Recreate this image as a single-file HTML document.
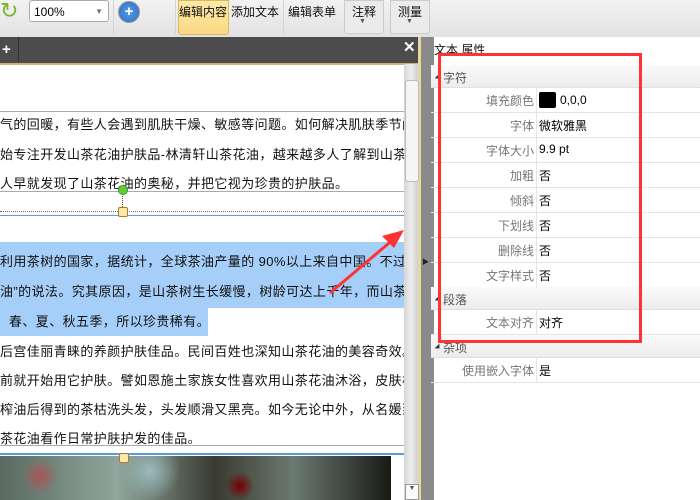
<html><head><style>
body{margin:0;width:700px;height:500px;overflow:hidden;position:relative;font-family:"Liberation Sans","Noto Sans CJK SC",sans-serif;background:#fff}
.a{position:absolute}
.t{position:absolute;font-size:13px;color:#111;white-space:nowrap}
.doc{position:absolute;left:0;top:64px;width:404px;height:436px;overflow:hidden}
.doc .t{letter-spacing:0.4px}
.row{position:absolute;left:431px;width:269px;height:25px;border-bottom:1px solid #e4e4e4;font-size:12px}
.row .l{position:absolute;right:166px;top:5px;color:#777}
.row .v{position:absolute;left:108px;top:5px;color:#000}
.row:before{content:"";position:absolute;left:105px;top:0;bottom:0;border-left:1px solid #e4e4e4}
.grp{position:absolute;left:431px;width:269px;height:22px;background:linear-gradient(#fafafa,#ececec);border-bottom:1px solid #e0e0e0;font-size:12px;color:#555}
.grp span{position:absolute;left:12px;top:4px}
.grp:before{content:"";position:absolute;left:3px;top:8px;border:3px solid transparent;border-right-color:#333;border-bottom-color:#333;transform:scale(.8)}
</style></head><body>
<div class="a" style="left:0;top:0;width:700px;height:37px;background:linear-gradient(#f2f2f2,#e2e2e2)"></div>
<div class="a" style="left:0;top:0;width:16px;height:24px;color:#7bb530;font-size:22px;line-height:22px">↻</div>
<div class="a" style="left:29px;top:0;width:80px;height:22px;background:#fff;border:1px solid #aaa;border-radius:3px;font-size:12px;line-height:22px;padding-left:4px;box-sizing:border-box">100%<span style="position:absolute;right:5px;top:0;color:#777;font-size:8px">▼</span></div>
<div class="a" style="left:118px;top:1px;width:20px;height:20px;border-radius:50%;background:radial-gradient(#5b9be0,#2a6fc5);border:1px solid #999;color:#fff;font-weight:bold;text-align:center;line-height:20px;font-size:15px">+</div>
<div class="a" style="left:113px;top:0;width:1px;height:34px;background:#d4d4d4"></div>
<div class="a" style="left:175px;top:0;width:1px;height:34px;background:#d4d4d4"></div>
<div class="a" style="left:178px;top:0;width:51px;height:35px;background:linear-gradient(#fdeaa8,#fad883);border:1px solid #d8b860;border-radius:0 0 3px 3px;box-sizing:border-box"></div>
<div class="t" style="left:179px;top:3px;font-size:12px">编辑内容</div>
<div class="t" style="left:231px;top:3px;font-size:12px">添加文本</div>
<div class="a" style="left:283px;top:0;width:1px;height:34px;background:#d4d4d4"></div>
<div class="t" style="left:288px;top:3px;font-size:12px">编辑表单</div>
<div class="a" style="left:344px;top:0;width:40px;height:34px;background:#ebebeb;border:1px solid #ccc;border-radius:0 0 3px 3px;box-sizing:border-box"></div>
<div class="t" style="left:352px;top:3px;font-size:12px">注释</div><div class="t" style="left:359px;top:18px;font-size:7px;color:#555">▼</div>
<div class="a" style="left:390px;top:0;width:40px;height:34px;background:#ebebeb;border:1px solid #ccc;border-radius:0 0 3px 3px;box-sizing:border-box"></div>
<div class="t" style="left:398px;top:3px;font-size:12px">测量</div><div class="t" style="left:406px;top:18px;font-size:7px;color:#555">▼</div>
<div class="a" style="left:0;top:37px;width:423px;height:26px;background:#4c4c4c;border-bottom:2px solid #c9b57a"></div>
<div class="a" style="left:0;top:37px;width:16px;height:25px;border-right:1px solid #333;color:#fff;font-weight:bold;font-size:15px;line-height:25px;padding-left:2px">+</div>
<div class="a" style="left:403px;top:38px;color:#fff;font-weight:bold;font-size:15px">✕</div>
<div class="a" style="left:418px;top:37px;width:13px;height:463px;background:#8a8a8a;border-left:3px solid #e8d8a0"></div>
<div class="t" style="left:422px;top:257px;font-size:7px;color:#222">▶</div>
<div class="a" style="left:404px;top:64px;width:14px;height:436px;background:linear-gradient(90deg,#d5d5d5,#eee,#d0d0d0)"></div>
<div class="a" style="left:405px;top:80px;width:12px;height:100px;background:#f5f5f5;border:1px solid #bbb;border-radius:3px"></div>
<div class="a" style="left:405px;top:484px;width:12px;height:14px;background:#fafafa;border:1px solid #999;font-size:7px;text-align:center;color:#555">▼</div>
<div class="doc">
<div class="a" style="left:0;top:47px;width:404px;height:1px;background:#aaa"></div>
<div class="t" style="left:0;top:50px">气的回暖，有些人会遇到肌肤干燥、敏感等问题。如何解决肌肤季节问</div>
<div class="t" style="left:0;top:80px">始专注开发山茶花油护肤品-林清轩山茶花油，越来越多人了解到山茶</div>
<div class="t" style="left:0;top:109px">人早就发现了山茶花油的奥秘，并把它视为珍贵的护肤品。</div>
<div class="a" style="left:0;top:127px;width:404px;height:1px;background:#aaa"></div>
<div class="a" style="left:122px;top:125px;border-left:1px dotted #444;height:22px"></div>
<div class="a" style="left:0;top:147px;width:404px;border-top:1px dotted #666"></div>
<div class="a" style="left:0;top:151px;width:404px;height:1px;background:#5b9be0"></div>
<div class="a" style="left:0;top:178px;width:404px;height:66px;background:#a5cff9"></div>
<div class="a" style="left:0;top:244px;width:208px;height:28px;background:#a5cff9"></div>
<div class="t" style="left:0;top:187px">利用茶树的国家，据统计，全球茶油产量的 90%以上来自中国。不过</div>
<div class="t" style="left:0;top:217px">油”的说法。究其原因，是山茶树生长缓慢，树龄可达上千年，而山茶</div>
<div class="t" style="left:9px;top:247px">春、夏、秋五季，所以珍贵稀有。</div>
<div class="t" style="left:0;top:277px">后宫佳丽青睐的养颜护肤佳品。民间百姓也深知山茶花油的美容奇效。</div>
<div class="t" style="left:0;top:306px">前就开始用它护肤。譬如恩施土家族女性喜欢用山茶花油沐浴，皮肤极富</div>
<div class="t" style="left:0;top:335px">榨油后得到的茶枯洗头发，头发顺滑又黑亮。如今无论中外，从名媛到</div>
<div class="t" style="left:0;top:364px">茶花油看作日常护肤护发的佳品。</div>
<div class="a" style="left:0;top:381px;width:404px;height:1px;background:#aaa"></div>
<div class="a" style="left:0;top:389px;width:404px;height:2px;background:#5b9be0"></div>
<div class="a" style="left:0;top:392px;width:391px;height:44px;background:radial-gradient(circle at 40px 20px,#a55 0,transparent 18px),radial-gradient(circle at 240px 30px,#700 0,transparent 14px),radial-gradient(circle at 150px 15px,#9bb 0,transparent 30px),linear-gradient(90deg,#5a6a60,#8fa69c 30%,#3a3a30 55%,#6a7a70 75%,#1a1a15)"></div>
</div>
<div class="a" style="left:118px;top:185px;width:8px;height:8px;border-radius:50%;background:#6c3;border:1px solid #393"></div>
<div class="a" style="left:118px;top:207px;width:8px;height:8px;background:#fde9a6;border:1px solid #a08030;border-radius:2px"></div>
<div class="a" style="left:119px;top:453px;width:8px;height:8px;background:#fde9a6;border:1px solid #a08030;border-radius:2px"></div>
<svg class="a" style="left:320px;top:222px" width="90" height="80"><line x1="10" y1="71" x2="75" y2="16" stroke="#f33" stroke-width="3"/><polygon points="84,8 62,14 74,26" fill="#f33"/></svg>
<div class="t" style="left:434px;top:41px;font-size:12px">文本 属性</div>
<div class="grp" style="top:65px"><span>字符</span></div>
<div class="row" style="top:87px"><span class="l">填充颜色</span><span class="v"><span style="display:inline-block;width:17px;height:16px;background:#000;border-radius:2px;vertical-align:-4px;margin-right:4px"></span>0,0,0</span></div>
<div class="row" style="top:112px"><span class="l">字体</span><span class="v">微软雅黑</span></div>
<div class="row" style="top:137px"><span class="l">字体大小</span><span class="v">9.9 pt</span></div>
<div class="row" style="top:162px"><span class="l">加粗</span><span class="v">否</span></div>
<div class="row" style="top:187px"><span class="l">倾斜</span><span class="v">否</span></div>
<div class="row" style="top:212px"><span class="l">下划线</span><span class="v">否</span></div>
<div class="row" style="top:237px"><span class="l">删除线</span><span class="v">否</span></div>
<div class="row" style="top:262px"><span class="l">文字样式</span><span class="v">否</span></div>
<div class="grp" style="top:287px"><span>段落</span></div>
<div class="row" style="top:309px"><span class="l">文本对齐</span><span class="v">对齐</span></div>
<div class="grp" style="top:335px"><span>杂项</span></div>
<div class="row" style="top:357px"><span class="l">使用嵌入字体</span><span class="v">是</span></div>
<div class="a" style="left:438px;top:53px;width:198px;height:284px;border:3px solid #f33"></div>
</body></html>
